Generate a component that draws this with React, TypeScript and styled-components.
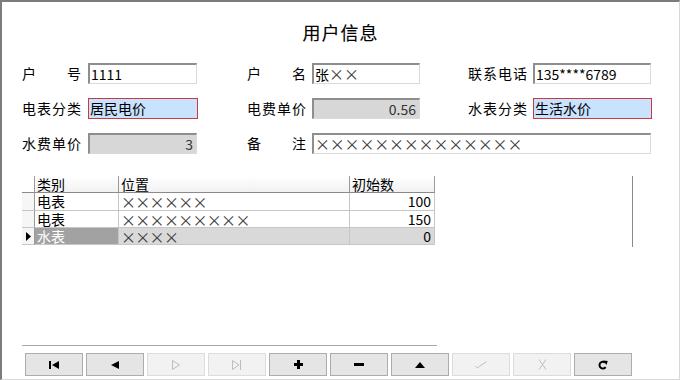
import React from "react";
import styled, { createGlobalStyle, css } from "styled-components";

const Global = createGlobalStyle`
  html, body { margin: 0; padding: 0; background: #fff; }
  body { font-family: "Noto Sans CJK SC", "Noto Sans", sans-serif; color: #000; }
`;

const Window = styled.div`
  box-sizing: border-box;
  width: 680px;
  height: 380px;
  border-top: 2px solid #7c7c7c;
  border-left: 2px solid #7c7c7c;
  border-right: 1px solid #d8d8d8;
  border-bottom: 1px solid #d8d8d8;
  background: #fff;
  display: flex;
  flex-direction: column;
  overflow: hidden;
`;

const Title = styled.div`
  margin-top: 18px;
  height: 24px;
  line-height: 24px;
  font-size: 18px;
  text-align: center;
  letter-spacing: 1px;
  -webkit-text-stroke: 0.12px #000;
`;

const Form = styled.div`
  margin-top: 19px;
  padding-left: 20px;
  display: grid;
  grid-template-columns: 66px 159px 65px 156px 65px 118px;
  grid-auto-rows: 21px;
  row-gap: 14px;
`;

const Label = styled.div`
  width: 59px;
  font-size: 14px;
  line-height: 21px;
  text-align: justify;
  text-align-last: justify;
  white-space: nowrap;
`;

type Variant = "normal" | "focus" | "readonly";

const Box = styled.div<{ $variant?: Variant; $right?: boolean; $w: number; $span?: number }>`
  box-sizing: border-box;
  width: ${(p) => p.$w}px;
  height: 21px;
  font-size: 14px;
  line-height: 18px;
  padding: 0 3px 0 1px;
  white-space: nowrap;
  overflow: hidden;
  text-align: ${(p) => (p.$right ? "right" : "left")};
  ${(p) => p.$span && css`grid-column: span ${p.$span};`}
  ${(p) =>
    p.$variant === "focus"
      ? css`
          border: 1px solid #c93a3e;
          background: #c9e2fd;
          line-height: 19px;
        `
      : css`
          border-top: 2px solid #8e8e8e;
          border-left: 2px solid #8e8e8e;
          border-right: 1px solid #dadada;
          border-bottom: 1px solid #dadada;
          background: ${p.$variant === "readonly" ? "#d7d7d7" : "#fff"};
          color: ${p.$variant === "readonly" ? "#333" : "#000"};
        `}
`;

const Marks = styled.span<{ $gap?: number }>`
  font-size: 15px;
  letter-spacing: ${(p) => p.$gap ?? 0}px;
  color: #3a3a3a;
`;

const GridArea = styled.div`
  margin-top: 22px;
  margin-left: 20px;
  width: 611px;
  height: 71px;
  border-right: 1px solid #8a8a8a;
  box-sizing: border-box;
`;

const Table = styled.div`
  width: 413px;
  display: grid;
  grid-template-columns: 13px 84px 231px 85px;
  grid-template-rows: 17px 18px 17px 17px;
  font-size: 14px;
`;

const HeadCell = styled.div<{ $corner?: boolean }>`
  box-sizing: border-box;
  background: ${(p) => (p.$corner ? "#fff" : "linear-gradient(#ffffff, #f1f1f1)")};
  border-bottom: 1px solid #8a8a8a;
  border-right: 1px solid #9a9a9a;
  line-height: 16px;
  padding-left: 2px;
  white-space: nowrap;
  overflow: hidden;
`;

const Indicator = styled.div`
  box-sizing: border-box;
  background: #f6f6f6;
  border-bottom: 1px solid #c6c6c6;
  border-right: 1px solid #9a9a9a;
  display: flex;
  align-items: center;
  justify-content: center;
`;

const Cell = styled.div<{ $sel?: boolean; $current?: boolean; $right?: boolean }>`
  box-sizing: border-box;
  border-bottom: 1px solid #c6c6c6;
  border-right: 1px solid #c6c6c6;
  line-height: 17px;
  padding: 0 3px 0 2px;
  white-space: nowrap;
  overflow: hidden;
  text-align: ${(p) => (p.$right ? "right" : "left")};
  background: ${(p) => (p.$current ? "#a2a2a2" : p.$sel ? "#d9d9d9" : "#fff")};
  color: ${(p) => (p.$current ? "#fff" : "#000")};
`;

const Rule = styled.div`
  margin-top: 98px;
  margin-left: 20px;
  width: 415px;
  border-top: 1px solid #a8a8a8;
`;

const Toolbar = styled.div`
  margin-top: 7px;
  margin-left: 23px;
  display: flex;
  gap: 3px;
`;

const NavButton = styled.div<{ $disabled?: boolean }>`
  box-sizing: border-box;
  width: 58px;
  height: 23px;
  display: flex;
  align-items: center;
  justify-content: center;
  background: ${(p) => (p.$disabled ? "#f2f2f2" : "#e5e5e5")};
  border: 1px solid ${(p) => (p.$disabled ? "#dcdcdc" : "#acacac")};
  color: ${(p) => (p.$disabled ? "#bdbdbd" : "#000")};
`;

const FirstIcon = () => (
  <svg width="10" height="8" viewBox="0 0 10 8">
    <rect x="0" y="0" width="2" height="8" fill="currentColor" />
    <polygon points="10,0 3,4 10,8" fill="currentColor" />
  </svg>
);
const PrevIcon = () => (
  <svg width="8" height="8" viewBox="0 0 8 8">
    <polygon points="8,0 0,4 8,8" fill="currentColor" />
  </svg>
);
const NextIcon = () => (
  <svg width="8" height="10" viewBox="0 0 8 10">
    <polygon points="0.5,0.5 7.5,5 0.5,9.5" fill="none" stroke="currentColor" strokeWidth="1" />
  </svg>
);
const LastIcon = () => (
  <svg width="10" height="10" viewBox="0 0 10 10">
    <polygon points="0.5,0.5 7,5 0.5,9.5" fill="none" stroke="currentColor" strokeWidth="1" />
    <line x1="8.5" y1="0" x2="8.5" y2="10" stroke="currentColor" strokeWidth="1" />
  </svg>
);
const AddIcon = () => (
  <svg width="9" height="9" viewBox="0 0 9 9">
    <rect x="3" y="0" width="3" height="9" fill="currentColor" />
    <rect x="0" y="3" width="9" height="3" fill="currentColor" />
  </svg>
);
const DelIcon = () => (
  <svg width="10" height="3" viewBox="0 0 10 3">
    <rect x="0" y="0" width="10" height="3" fill="currentColor" />
  </svg>
);
const EditIcon = () => (
  <svg width="10" height="6" viewBox="0 0 10 6">
    <polygon points="5,0 10,6 0,6" fill="currentColor" />
  </svg>
);
const PostIcon = () => (
  <svg width="12" height="8" viewBox="0 0 12 8">
    <polyline points="0.5,5 2.5,7 5,5 11.5,0.5" fill="none" stroke="currentColor" strokeWidth="1" />
  </svg>
);
const CancelIcon = () => (
  <svg width="9" height="11" viewBox="0 0 9 11">
    <line x1="1" y1="0.5" x2="8" y2="10.5" stroke="currentColor" strokeWidth="1" />
    <line x1="8" y1="0.5" x2="1" y2="10.5" stroke="currentColor" strokeWidth="1" />
  </svg>
);
const RefreshIcon = () => (
  <svg width="10" height="10" viewBox="0 0 10 10">
    <path d="M7.2 2.6 A3.4 3.4 0 1 0 7.6 7.2" fill="none" stroke="currentColor" strokeWidth="2" />
    <polygon points="5.2,0.6 9.8,1 8.4,5" fill="currentColor" />
  </svg>
);

const rows = [
  { kind: "电表", place: "××××××", init: "100" },
  { kind: "电表", place: "×××××××××", init: "150" },
  { kind: "水表", place: "××××", init: "0" },
];

export default function App() {
  return (
    <>
      <Global />
      <Window>
        <Title>用户信息</Title>
        <Form>
          <Label>户号</Label>
          <Box $w={109}>1111</Box>
          <Label>户名</Label>
          <Box $w={108}>张<Marks>××</Marks></Box>
          <Label>联系电话</Label>
          <Box $w={118}>135****6789</Box>

          <Label>电表分类</Label>
          <Box $w={110} $variant="focus">居民电价</Box>
          <Label>电费单价</Label>
          <Box $w={108} $variant="readonly" $right>0.56</Box>
          <Label>水表分类</Label>
          <Box $w={119} $variant="focus">生活水价</Box>

          <Label>水费单价</Label>
          <Box $w={109} $variant="readonly" $right>3</Box>
          <Label>备注</Label>
          <Box $w={339} $span={3}><Marks $gap={-0.2}>××××××××××××××</Marks></Box>
        </Form>

        <GridArea>
          <Table>
            <HeadCell $corner />
            <HeadCell>类别</HeadCell>
            <HeadCell>位置</HeadCell>
            <HeadCell>初始数</HeadCell>
            {rows.map((r, i) => {
              const sel = i === rows.length - 1;
              return (
                <React.Fragment key={i}>
                  <Indicator>
                    {sel && (
                      <svg width="5" height="9" viewBox="0 0 5 9">
                        <polygon points="0,0 5,4.5 0,9" fill="#000" />
                      </svg>
                    )}
                  </Indicator>
                  <Cell $current={sel}>{r.kind}</Cell>
                  <Cell $sel={sel}><Marks $gap={-0.7}>{r.place}</Marks></Cell>
                  <Cell $sel={sel} $right>{r.init}</Cell>
                </React.Fragment>
              );
            })}
          </Table>
        </GridArea>

        <Rule />

        <Toolbar>
          <NavButton><FirstIcon /></NavButton>
          <NavButton><PrevIcon /></NavButton>
          <NavButton $disabled><NextIcon /></NavButton>
          <NavButton $disabled><LastIcon /></NavButton>
          <NavButton><AddIcon /></NavButton>
          <NavButton><DelIcon /></NavButton>
          <NavButton><EditIcon /></NavButton>
          <NavButton $disabled><PostIcon /></NavButton>
          <NavButton $disabled><CancelIcon /></NavButton>
          <NavButton><RefreshIcon /></NavButton>
        </Toolbar>
      </Window>
    </>
  );
}
